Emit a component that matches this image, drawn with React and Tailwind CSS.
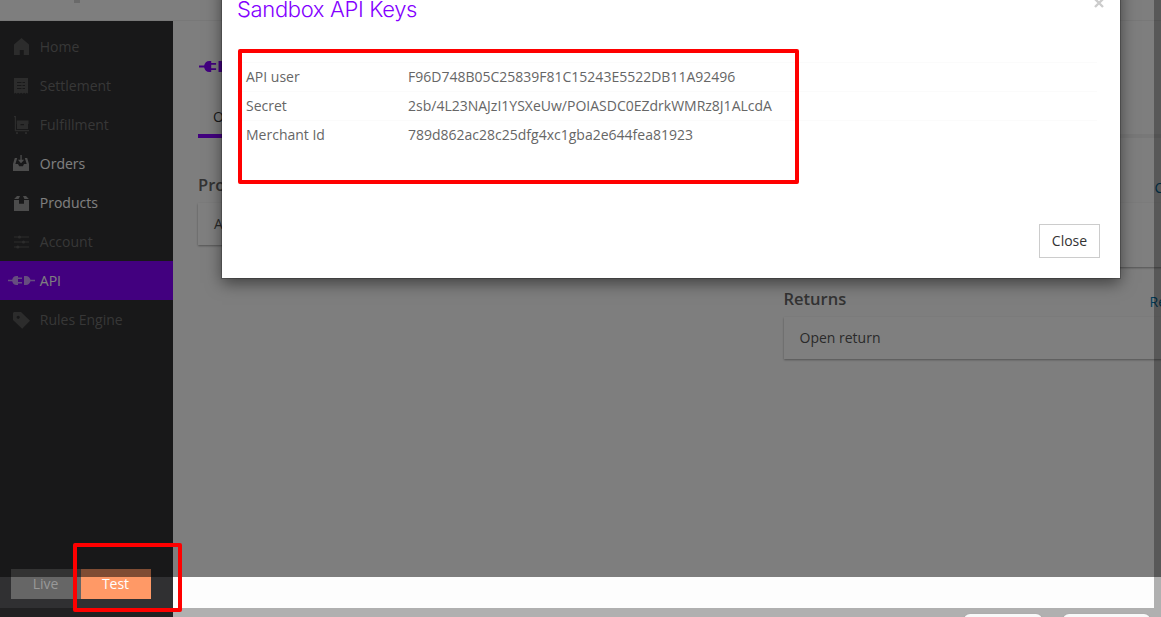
import React from "react";

const Icon = ({ children, className = "" }) => (
  <svg viewBox="0 0 18 18" className={"h-[18px] w-[18px] shrink-0 " + className} fill="currentColor">
    {children}
  </svg>
);

const HomeIcon = () => (
  <Icon><path d="M2 6.500 9.500 0 17 6.500V17h-5.200v-5h-4v5H2z" /></Icon>
);
const SettlementIcon = () => (
  <Icon>
    <path fillRule="evenodd" d="M2 1h14v15.700l-1.200-.9-1.200.9-1.500-.9-1.500.9-1.500-.9-1.500.9-1.500-.9-1.500.9-1.200-.9-1.400.9zM5 5v1h4.500V5zm5.500 0v1H13V5zM5 8v1h4.500V8zm5.500 0v1H13V8zM5 11v1h4.500v-1zm5.500 0v1H13v-1z" />
  </Icon>
);
const FulfillmentIcon = () => (
  <Icon>
    <path fillRule="evenodd" d="M2 0h2v14h13v1.200H2.800V1.200H2zM4.800 4.500h11.700V8H16v5H5V8h-.2zM8.500 8v1.200h3.500V8z" />
    <circle cx="5" cy="17" r="1.100" /><circle cx="14" cy="17" r="1.100" />
  </Icon>
);
const OrdersIcon = () => (
  <Icon>
    <path d="M8.400 0h1.300v4.800h2.500L9 8.300 5.900 4.800h2.500zM2.800 3h2.400L3.400 9H6l1.200 2.200h3.700L12 9h2.700l-1.900-6h2.400L17 9v7H1V9z" />
  </Icon>
);
const ProductsIcon = () => (
  <Icon>
    <path d="M5 2h3L6.500 5H2.200zM11 2h3l2.800 3h-4.300zM2 6h5v3.800h5V6h5v11H2z" />
  </Icon>
);
const AccountIcon = () => (
  <Icon>
    <path d="M2 3.400h15v1.200H2zM2 8.400h15v1.200H2zM2 13.400h15v1.200H2z" />
    <circle cx="7.500" cy="4" r="1.600" /><circle cx="11.500" cy="9" r="1.600" /><circle cx="5.800" cy="14" r="1.600" />
  </Icon>
);
const PlugIcon = ({ className }) => (
  <svg viewBox="0 0 27 9" className={"shrink-0 " + className} fill="currentColor">
    <path d="M0 3.700h4.200C4.800 1.500 6 0 8.500 0H10v1.600h4v1.500h-4v2.800h4v1.500h-4V9H8.500C6 9 4.800 7.500 4.200 5.300H0z" />
    <path d="M16 0h2c2.200 0 3.800 1.500 4.500 3.700H27v1.600h-4.500C21.800 7.500 20.200 9 18 9h-2z" />
  </svg>
);
const TagIcon = () => (
  <Icon>
    <path fillRule="evenodd" d="M2 1h7L18 9.700 10.200 17.800 1 9V2zM6.200 4.700a1.600 1.600 0 1 0 .01 0z" />
  </Icon>
);

const items = [
  ["Home", HomeIcon, "off"],
  ["Settlement", SettlementIcon, "off"],
  ["Fulfillment", FulfillmentIcon, "off"],
  ["Orders", OrdersIcon, "on"],
  ["Products", ProductsIcon, "on"],
  ["Account", AccountIcon, "off"],
  ["API", null, "active"],
  ["Rules Engine", TagIcon, "off"],
];

const rowStyle = {
  off: "text-[#6e6e6e]",
  on: "text-white",
  active: "bg-[#8400ff] text-white",
};
const iconStyle = { off: "text-[#585858]", on: "text-[#999999]", active: "text-[#e0c0ff]/80" };

function Sidebar() {
  return (
    <aside className="flex w-[173px] shrink-0 flex-col bg-[#303032] pt-1.5">
      {items.map(([label, Glyph, state]) => (
        <div key={label} className={"flex h-[39px] shrink-0 items-center " + rowStyle[state]}>
          <span className={"flex w-[39.800px] shrink-0 items-center " + iconStyle[state] + (Glyph ? " pl-3" : " pl-2")}>
            {Glyph ? <Glyph /> : <PlugIcon className="h-[9px] w-[27px]" />}
          </span>
          <span>{label}</span>
        </div>
      ))}
      <div className="mt-auto mb-[18px] ml-[11px] flex h-[30px] w-[140px] leading-[30px]">
        <div className="w-[70px] bg-[#666666] pr-px text-center text-[#999999]">Live</div>
        <div className="w-[70px] bg-[#ff9966] pr-px text-center text-white">Test</div>
      </div>
    </aside>
  );
}

const card = "bg-white shadow-[0_1px_2px_rgba(0,0,0,0.35)] pl-4 text-[#555]";

function Main() {
  return (
    <main className="flex min-w-0 flex-1 flex-col pl-[25px] text-[#666]">
      <PlugIcon className="mt-10 ml-px h-[11px] w-[33px] text-[#8400ff]" />
      <div className="mt-[35px] h-[31px] border-b-4 border-[#f0f0f0]">
        <div className="h-[31px] w-20 border-b-4 border-[#8400ff] pl-[15px] leading-5 text-[#333]">O</div>
      </div>
      <div className="flex pt-[35px]">
        <section className="w-[585.500px] shrink-0">
          <h2 className="h-[30px] text-[16.500px] font-semibold leading-[24px]">Pro</h2>
          <div className={"h-[42px] leading-[42px] " + card}>A</div>
        </section>
        <section className="w-[400px] shrink-0">
          <div className="flex h-[30px] pl-[371px] pt-[5px] text-[#0078b4]">C</div>
          <div className={"h-[64px] " + card} />
          <div className="flex h-[50px] pt-5">
            <h2 className="w-[366px] text-[16.500px] font-semibold leading-[24px]">Returns</h2>
            <span className="pt-[5px] leading-5 text-[#0078b4]">Re</span>
          </div>
          <div className={"h-[42px] leading-[42px] " + card}>Open return</div>
        </section>
      </div>
    </main>
  );
}

const keys = [
  ["API user", "F96D748B05C25839F81C15243E5522DB11A92496"],
  ["Secret", "2sb/4L23NAJzI1YSXeUw/POIASDC0EZdrkWMRz8J1ALcdA"],
  ["Merchant Id", "789d862ac28c25dfg4xc1gba2e644fea81923"],
];

function Modal() {
  return (
    <div className="absolute -top-5 left-[222px] flex h-[298px] w-[898px] flex-col bg-white px-[15px] pt-[15px] shadow-[0_0_0_1px_rgba(0,0,0,0.2),0_5px_15px_rgba(0,0,0,0.5)]">
      <div className="flex h-[67px] justify-between">
        <h1 className="font-['Inter','Open_Sans',sans-serif] text-[22px] font-light leading-7 tracking-[-0.350px] text-[#8400ff]">Sandbox API Keys</h1>
        <svg viewBox="0 0 10 10" className="mt-[3px] mr-[1px] h-[10px] w-[10px]" stroke="#cccccc" strokeWidth="2.400">
          <path d="M1 1l8 8M9 1L1 9" />
        </svg>
      </div>
      <div className="mr-2 text-[#666]">
        {keys.map(([name, value]) => (
          <div key={name} className="flex h-[29px] items-center border-t border-[#fbfbfb] pl-[9px]">
            <span className="w-[162px]">{name}</span>
            <span>{value}</span>
          </div>
        ))}
      </div>
      <button className="mt-auto mr-[5px] mb-5 h-[34px] w-[61px] self-end border border-[#cccccc] text-[#333]">Close</button>
    </div>
  );
}

export default function App() {
  return (
    <div className="relative flex h-[617px] w-[1161px] flex-col overflow-hidden bg-[#fdfdfd] font-['Open_Sans','Noto_Sans',sans-serif] text-[14px] leading-5">
      <header className="h-[21px] shrink-0 border-b border-[#f0f0f0] pl-[74px]">
        <div className="h-[3px] w-1.5 bg-[#d4d4d4]" />
      </header>
      <div className="flex min-h-0 flex-1">
        <Sidebar />
        <Main />
      </div>
      <div className="absolute inset-x-0 top-0 h-[577px] bg-black/50" />
      <div className="absolute top-0 right-0 h-[608px] w-[7px] bg-black/30" />
      <div className="absolute inset-x-0 bottom-0 flex h-[9px] gap-[21px] overflow-hidden bg-black/30 pt-1.5 pl-[964px]">
        <div className="h-6 w-[78px] shrink-0 rounded-md bg-[#f8f8f8] shadow" />
        <div className="h-6 w-[87px] shrink-0 rounded-md bg-[#f8f8f8] shadow" />
      </div>
      <Modal />
      <div className="absolute top-[49px] left-[238px] h-[135px] w-[561px] rounded-[2px] border-4 border-[#ff0000]" />
      <div className="absolute top-[543px] left-[73px] h-[69px] w-[109px] rounded-[2px] border-4 border-[#ff0000]" />
    </div>
  );
}
